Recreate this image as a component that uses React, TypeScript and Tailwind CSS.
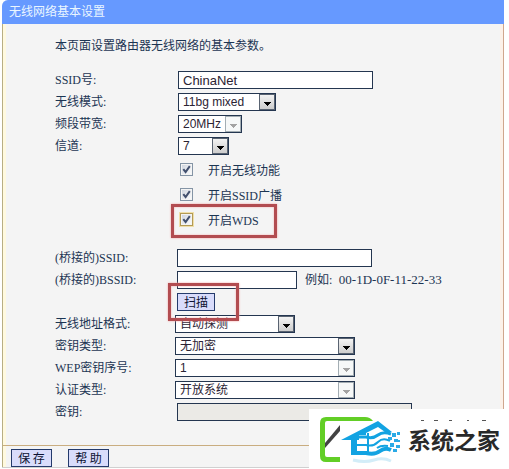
import { useState } from 'react';
import type { ReactNode } from 'react';
import clsx from 'clsx';

const fieldClass =
  "h-[18px] max-w-full border border-[#243650] bg-white px-1 font-['Liberation_Sans','Noto_Sans_CJK_SC',sans-serif] text-[13px] leading-4 text-[#2b2333] outline-none disabled:bg-[#ebeae6]";

const buttonClass =
  "flex h-[18px] items-center justify-center border border-[#243a6b] bg-[#d9dcfb] font-['Noto_Sans_CJK_SC',sans-serif] text-xs leading-4 text-[#0d1233]";

type RowProps = {
  label: string;
  htmlFor?: string;
  labelWidth: string;
  children: ReactNode;
};

const Row = ({ label, htmlFor, labelWidth, children }: RowProps) => (
  <div className="flex h-[18px] items-center">
    <label htmlFor={htmlFor} className={clsx('shrink-0 whitespace-nowrap', labelWidth)}>
      {label}
    </label>
    {children}
  </div>
);

type SelectProps = {
  id: string;
  options: string[];
  width: string;
  disabled?: boolean;
};

const Select = ({ id, options, width, disabled }: SelectProps) => (
  <div className={clsx('relative', width)}>
    <select
      id={id}
      disabled={disabled}
      className="block h-[18px] w-full appearance-none border border-[#243650] bg-white pl-1 font-['Liberation_Sans','Noto_Sans_CJK_SC',sans-serif] text-xs leading-4 text-[#2b2333] opacity-100 outline-none"
    >
      {options.map((option) => (
        <option key={option}>{option}</option>
      ))}
    </select>
    <span
      className={clsx(
        'pointer-events-none absolute top-px right-px flex h-4 w-4 items-center justify-center border',
        disabled
          ? 'border-[#a3adb3] bg-[#f6f8f8] text-[#a3a3a3]'
          : 'border-[#596371] bg-linear-to-b from-[#f3f3f3] to-[#cdcdcd] text-black',
      )}
    >
      <svg viewBox="0 0 8 4" className="mt-1 h-1 w-2" fill="currentColor" shapeRendering="crispEdges">
        <path d="M0 0h8L4 4z" />
      </svg>
    </span>
  </div>
);

type CheckProps = {
  id: string;
  label: string;
  focused?: boolean;
};

const Check = ({ id, label, focused }: CheckProps) => {
  const [checked, setChecked] = useState(true);

  return (
    <div className="flex items-center gap-[15px]">
      <span className="relative -mt-1 h-[13px] w-[13px]">
        <input
          id={id}
          type="checkbox"
          checked={checked}
          onChange={(e) => setChecked(e.target.checked)}
          className={clsx(
            'block h-[13px] w-[13px] appearance-none border bg-linear-to-br from-[#ccd2dc] to-white shadow-[inset_0_0_0_1px_#f4f4f4]',
            focused ? 'border-[#b39a55] outline outline-[#f0dfa8]' : 'border-[#8494a5]',
          )}
        />
        {checked && (
          <svg viewBox="0 0 13 13" className="pointer-events-none absolute inset-0" fill="none" stroke="#42506e" strokeWidth="2">
            <path d="M3.3 6.2 5.6 9 9.8 3.2" />
          </svg>
        )}
      </span>
      <label htmlFor={id}>{label}</label>
    </div>
  );
};

const Highlight = ({ className }: { className: string }) => (
  <span
    className={clsx(
      'pointer-events-none absolute z-10 border-3 border-[#b24c50] shadow-[0_0_2px_#f5a5a5,inset_0_0_2px_#f5a5a5]',
      className,
    )}
  />
);

const HouseLogo = () => (
  <svg viewBox="0 0 84 52" className="h-[52px] w-[84px] shrink-0" fill="none">
    <path
      d="M53 8Q50 4 45 4H6Q0 4 0 10V43Q0 49 6 49H20V44H7Q5 44 5 42V10Q5 8 7 8Z"
      fill="#62ce26"
    />
    <path d="M20 12V18L5 35V30Z" fill="#424242" />
    <path d="M21 27 58 8 72 19H65L58 14 46 20V22H39V27H37V38L36 42H31V27Z" fill="#12a3e2" />
    <g stroke="#12a3e2" strokeWidth="3">
      <path d="M38 24H46Q53 26 58 22T71 21" />
      <path d="M37 32H46Q53 34 58 29T70 28" strokeWidth="2" />
      <path d="M33 40H46Q55 42 60 38T71 37" strokeWidth="4" />
      <path d="M48 20V40" strokeWidth="2" />
      <path d="M57 35Q61 32 68 33" strokeWidth="2" />
    </g>
    <g fill="#2aaae6">
      <path d="M72 20h4v4h-4zM77 19h3v3h-3zM68 24h4v3h-4zM74 26h4v3h-4zM70 30h4v4h-4zM76 32h4v3h-4zM73 36h4v3h-4zM78 27h2v2h-2z" />
    </g>
    <path d="M33 47Q45 50 54 47T71 48" stroke="#d3edf8" strokeWidth="3" />
  </svg>
);

export default function App() {
  return (
    <main className="relative bg-white font-['Liberation_Serif','Noto_Sans_CJK_SC',serif] text-xs leading-4 text-[#1c3553]">
      <form
        onSubmit={(e) => e.preventDefault()}
        className="mr-[5px] ml-[2px] overflow-hidden rounded-tl-md border-b border-[#d0d0d0] bg-[#f4f4f4]"
      >
        <h1 className="flex h-6 items-center bg-[#6699ff] pl-[7px] text-xs leading-4 font-normal text-[#eaf6ff]">
          无线网络基本设置
        </h1>

        <div className="border-r border-l border-r-[#cfa68e] border-l-[#b8ae83] shadow-[inset_3px_0_0_#fff9df,inset_-3px_0_0_#fcf1e9]">
          <div className="border-b border-[#c9ad80] border-x-transparent pt-[14px] pb-6 pl-[52px]">
            <p>本页面设置路由器无线网络的基本参数。</p>

            <div className="mt-[17px] flex flex-col gap-1">
              <Row label="SSID号:" htmlFor="ssid" labelWidth="w-[123px]">
                <input id="ssid" defaultValue="ChinaNet" className={clsx(fieldClass, 'w-[195px]')} />
              </Row>
              <Row label="无线模式:" htmlFor="mode" labelWidth="w-[123px]">
                <Select id="mode" options={['11bg mixed']} width="w-[98px]" />
              </Row>
              <Row label="频段带宽:" htmlFor="bandwidth" labelWidth="w-[123px]">
                <Select id="bandwidth" options={['20MHz']} width="w-16" disabled />
              </Row>
              <Row label="信道:" htmlFor="channel" labelWidth="w-[123px]">
                <Select id="channel" options={['7']} width="w-[51px]" />
              </Row>
            </div>

            <div className="mt-2 ml-[125px] flex flex-col gap-[9px]">
              <Check id="wireless" label="开启无线功能" />
              <Check id="broadcast" label="开启SSID广播" />
              <div className="relative">
                <Check id="wds" label="开启WDS" focused />
                <Highlight className="-top-[9px] -left-[9px] h-[34px] w-[106px]" />
              </div>
            </div>

            <div className="mt-5 flex flex-col gap-1">
              <Row label="(桥接的)SSID:" htmlFor="bridge-ssid" labelWidth="w-[122px]">
                <input id="bridge-ssid" className={clsx(fieldClass, 'w-[195px]')} />
              </Row>
              <Row label="(桥接的)BSSID:" htmlFor="bridge-bssid" labelWidth="w-[122px]">
                <input id="bridge-bssid" className={clsx(fieldClass, 'w-[120px]')} />
                <span className="ml-2 text-[13px] whitespace-nowrap">
                  <span className="text-xs">例如:</span>&nbsp; 00-1D-0F-11-22-33
                </span>
              </Row>
              <div className="relative ml-[122px] w-[38px]">
                <button type="button" className={clsx(buttonClass, 'w-full')}>
                  扫描
                </button>
                <Highlight className="-top-[10px] -left-[9px] h-[38px] w-[71px]" />
              </div>
              <Row label="无线地址格式:" htmlFor="address" labelWidth="w-[120px]">
                <Select id="address" options={['自动探测']} width="w-[120px]" />
              </Row>
              <Row label="密钥类型:" htmlFor="key-type" labelWidth="w-[120px]">
                <Select id="key-type" options={['无加密']} width="w-[180px]" />
              </Row>
              <Row label="WEP密钥序号:" htmlFor="wep" labelWidth="w-[120px]">
                <Select id="wep" options={['1']} width="w-[180px]" disabled />
              </Row>
              <Row label="认证类型:" htmlFor="auth" labelWidth="w-[120px]">
                <Select id="auth" options={['开放系统']} width="w-[180px]" disabled />
              </Row>
              <Row label="密钥:" htmlFor="key" labelWidth="w-[122px]">
                <input id="key" disabled className={clsx(fieldClass, 'w-[235px]')} />
              </Row>
            </div>
          </div>

          <div className="flex gap-4 pt-[3px] pl-2">
            <button type="submit" className={clsx(buttonClass, 'w-[41px]')}>
              保 存
            </button>
            <button type="button" className={clsx(buttonClass, 'w-[41px]')}>
              帮 助
            </button>
          </div>
        </div>
      </form>

      <div className="absolute right-0 -bottom-px flex h-[60px] w-[200px] items-center bg-white pl-[11px]">
        <HouseLogo />
        <span className="ml-1 font-['Noto_Sans_CJK_SC',sans-serif] text-[23px] leading-6 font-bold whitespace-nowrap text-[#292929]">
          系统之家
        </span>
        <svg viewBox="0 0 70 2" className="absolute top-[11px] right-5 h-[2px] w-[70px]" fill="#555">
          <path d="M2 0h3v1H2zM15 0h4v1h-4zM30 0h3v1h-3zM48 0h2v1h-2zM63 0h4v1h-4z" />
        </svg>
      </div>
    </main>
  );
}
